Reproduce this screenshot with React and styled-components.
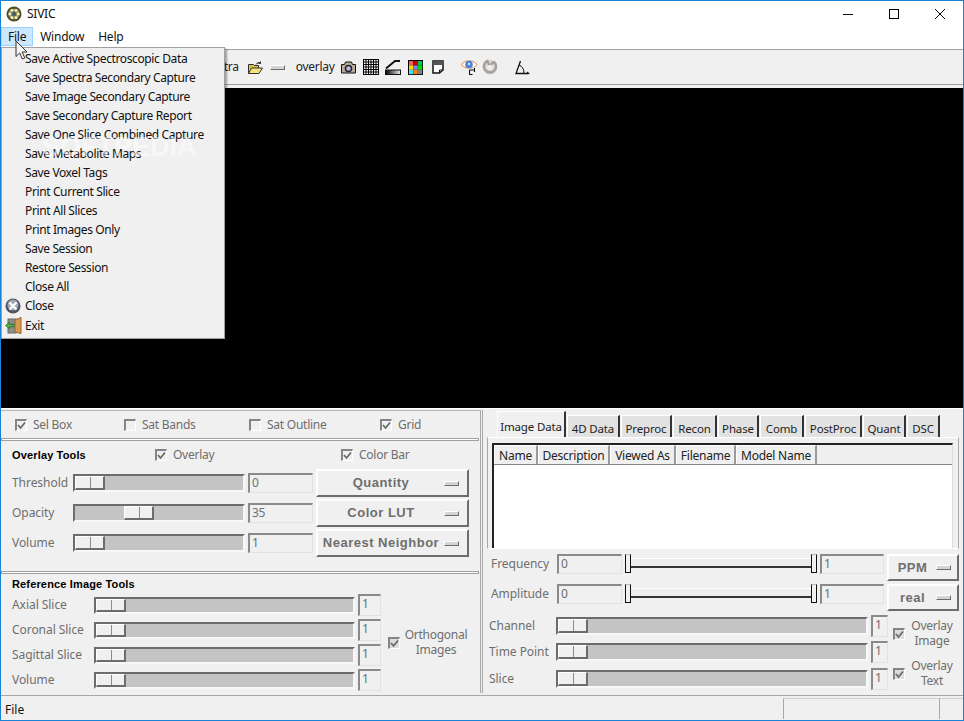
import React from "react";
import styled, { createGlobalStyle } from "styled-components";

const Global = createGlobalStyle`
  html, body { margin: 0; padding: 0; background: #f0f0f0; }
  * { box-sizing: border-box; }
`;

const UI = `"Noto Sans", "Open Sans", "Liberation Sans", sans-serif`;
const DIM = "#6e6e6e";

const Win = styled.div`
  position: relative; width: 964px; height: 721px; overflow: hidden;
  border: 1px solid #1a82d4; background: #f0f0f0;
  display: flex; flex-direction: column;
  font: 12px/16px ${UI}; letter-spacing: -0.25px; color: #111;
`;
const TitleBar = styled.div`
  height: 25px; flex: none; background: #fff; display: flex; align-items: center; padding-left: 5px; gap: 5px;
`;
const WinButtons = styled.div`margin-left: auto; display: flex;`;
const WinButton = styled.div`width: 46px; height: 25px; display: flex; align-items: center; justify-content: center;`;
const MenuBar = styled.div`height: 23px; flex: none; background: #fff; display: flex; align-items: flex-start; padding-top: 1px;`;
const MenuTitle = styled.div`
  height: 19px; line-height: 17px; padding: 0 6px; border: 1px solid ${p => (p.$open ? "#99d1ff" : "transparent")};
  background: ${p => (p.$open ? "#cce8ff" : "transparent")};
`;
const Toolbar = styled.div`
  height: 36px; flex: none; margin-bottom: 3px; border-top: 1px solid #a0a0a0; border-bottom: 1px solid #a0a0a0;
  display: flex; align-items: center; padding-left: 198px; color: #222;
`;
const ToolText = styled.span`margin-left: ${p => p.$ml || 0}px;`;
const ToolIcon = styled.svg`flex: none; display: block; margin-left: ${p => p.$ml || 0}px; overflow: visible;`;
const Canvas = styled.div`height: 320px; flex: none; background: #000;`;

const Controls = styled.div`height: 288px; flex: none; display: flex; border-top: 1px solid #fff;`;
const LeftPanel = styled.div`width: 479px; flex: none; display: flex; flex-direction: column;`;
const RightPanel = styled.div`
  flex: 1; position: relative; border-left: 3px double #a8a8a8; margin-top: 1px; margin-bottom: 3px;
  display: flex; flex-direction: column; padding: 1px 0 0 4px;
`;
const CheckRow = styled.div`
  height: 28px; display: grid; grid-template-columns: 109px 125px 131px 1fr; align-items: center; padding-left: 14px;
  border-top: 1px solid #b8b8b8; margin-top: 1px;
`;
const CheckLabel = styled.label`
  display: flex; align-items: center; gap: 6px; color: ${DIM};
`;
const Box = styled.span`
  width: 12px; height: 12px; flex: none; display: flex; align-items: center; justify-content: center;
  border-top: 2px solid #858585; border-left: 2px solid #858585; border-bottom: 1px solid #fff; border-right: 1px solid #fff;
  background: ${p => (p.$dark ? "#dcdcdc" : "#f0f0f0")};
`;
const Groove = styled.div`height: 3px; flex: none; width: 478px; border: 1px solid #a0a0a0; background: #fff;`;
const OverlaySection = styled.div`height: 130px; flex: none; display: flex; flex-direction: column; padding: 6px 0 0 11px;`;
const HeadRow = styled.div`height: 16px; display: grid; grid-template-columns: 143px 186px 1fr; align-items: center;`;
const Heading = styled.span`font: bold 11px/14px "Liberation Sans", sans-serif; letter-spacing: 0.15px; color: #000;`;
const ToolRows = styled.div`display: flex; flex-direction: column; gap: 2px; margin-top: 6px;`;
const ToolRow = styled.div`
  height: 28px; display: grid; grid-template-columns: 58px 172px 65px 153px; column-gap: 3px; align-items: center;
`;
const FieldLabel = styled.span`color: ${DIM}; letter-spacing: -0.05px; white-space: nowrap;`;
const Trough = styled.div`
  height: ${p => p.$h || 18}px; background: #c4c4c4; padding-left: ${p => p.$pos || 0}px;
  border-top: 2px solid #6c6c6c; border-left: 2px solid #6c6c6c; border-bottom: 2px solid #f8f8f8; border-right: 2px solid #f8f8f8;
  display: flex;
`;
const Handle = styled.div`
  width: 30px; height: 100%; flex: none; background: linear-gradient(90deg, #f0f0f0 0 14px, #8c8c8c 14px 15px, #f0f0f0 15px);
  border-top: 1px solid #fff; border-left: 1px solid #fff; border-right: 2px solid #6c6c6c; border-bottom: 2px solid #6c6c6c;
`;
const Entry = styled.div`
  height: ${p => p.$h || 20}px; padding-left: 2px; color: ${DIM}; background: #f0f0f0;
  border-top: 2px solid #8a8a8a; border-left: 2px solid #8a8a8a; border-bottom: 1px solid #e2e2e2; border-right: 1px solid #e2e2e2;
  font: 12px/16px ${UI};
`;
const OptionButton = styled.div`
  height: ${p => p.$h || 28}px; display: flex; align-items: center; padding-right: ${p => p.$pr || 8}px; background: #f0f0f0;
  border-top: 2px solid #fff; border-left: 2px solid #fff; border-bottom: 2px solid #6c6c6c; border-right: 2px solid #6c6c6c;
  color: ${DIM}; font: bold 13px/16px "Liberation Sans", sans-serif; letter-spacing: 0.5px; white-space: nowrap;
`;
const OptionText = styled.span`flex: 1; text-align: center;`;
const Indicator = styled.span`
  width: 15px; height: 5px; flex: none; background: #d4d4d4; margin-left: ${p => p.$ml || 0}px;
  border-top: 1px solid #fff; border-left: 1px solid #fff; border-bottom: 1px solid #6c6c6c; border-right: 1px solid #6c6c6c;
`;
const RefSection = styled.div`flex: 1; padding: 3px 0 0 11px; display: flex; flex-direction: column;`;
const RefBody = styled.div`display: flex; margin-top: 3px;`;
const RefRows = styled.div`display: flex; flex-direction: column; gap: 3px;`;
const RefRow = styled.div`height: 22px; display: grid; grid-template-columns: 79px 261px 23px; column-gap: 3px; align-items: center;`;
const SideCheck = styled.div`
  display: flex; align-items: center; color: ${DIM}; line-height: 15px; text-align: center;
  margin-left: ${p => p.$ml}px;
`;
const SideText = styled.span`width: ${p => p.$w}px; margin-top: -2px;`;

const TabStrip = styled.div`height: 26px; flex: none; display: flex; align-items: flex-end; padding-left: 10px; gap: 1px;`;
const Tab = styled.div`
  width: ${p => p.$w}px; height: ${p => (p.$on ? 26 : 22)}px; text-align: center; line-height: ${p => (p.$on ? 29 : 26)}px;
  background: ${p => (p.$on ? "#f0f0f0" : "#e2e2e2")}; color: #222;
  border-top: 1px solid #fff; border-left: 1px solid #fff; border-right: 2px solid #333;
  font-size: 11.5px; letter-spacing: -0.15px; white-space: nowrap;
`;
const Pane = styled.div`
  height: 112px; width: 472px; flex: none; border-top: 1px solid #fff; border-left: 1px solid #a8a8a8; border-right: 1px solid #a8a8a8; border-bottom: 1px solid #fff;
  padding: 5px 5px 0 4px;
`;
const Table = styled.div`
  height: 105px; background: #fff; border-top: 2px solid #222; border-left: 2px solid #222; border-right: 1px solid #ddd;
`;
const HeaderRow = styled.div`height: 20px; display: flex; background: #efefef; border-bottom: 1px solid #888;`;
const HeaderCell = styled.div`
  width: ${p => p.$w}px; flex: none; text-align: center; line-height: 19px; color: #222; white-space: nowrap;
  border-top: 1px solid #fff; border-left: 1px solid #fff; border-right: 2px solid #9a9a9a;
`;
const RangeRows = styled.div`display: flex; flex-direction: column; gap: 3px; margin-top: 5px; padding-left: 4px;`;
const RangeRow = styled.div`
  height: 27px; display: grid; grid-template-columns: 63px 65px 192px 64px 72px; column-gap: 3px; align-items: start;
`;
const RangeLabel = styled(FieldLabel)`line-height: 20px;`;
const RangeTrack = styled.div`
  height: 20px; display: flex; align-items: stretch; justify-content: space-between; position: relative;
`;
const RangeLine = styled.div`
  position: absolute; left: 6px; right: 6px; top: 4px; height: 10px; border-top: 1px solid #fff; border-bottom: 2px solid #333; background: #ececec;
`;
const RangeThumb = styled.div`
  width: 6px; height: 19px; position: relative; background: #f0f0f0;
  border-left: 1px solid #111; border-right: 1px solid #111; border-bottom: 1px solid #111; border-top: 1px solid #bbb;
`;
const SliceBody = styled.div`display: flex; margin-top: 4px; padding-left: 2px;`;
const SliceRows = styled.div`display: grid; grid-template-rows: 26px 27px 22px;`;
const SliceRow = styled.div`height: 22px; display: grid; grid-template-columns: 64px 312px 17px; column-gap: 3px; align-items: center;`;
const SideStack = styled.div`display: flex; flex-direction: column; gap: 12px; margin-top: 5px;`;
const StatusBar = styled.div`height: 24px; flex: none; display: flex; border-top: 1px solid #a8a8a8; margin-top: -1px;`;
const StatusText = styled.div`flex: 1; padding: 6px 0 0 4px; letter-spacing: 0;`;
const StatusCell = styled.div`
  width: ${p => p.$w}px; flex: none; margin-top: 2px; border-top: 1px solid #d0d0d0; border-left: 1px solid #a8a8a8;
`;
const Menu = styled.div`
  position: absolute; left: 0; top: 46px; width: 224px; height: 292px; padding-top: 1px; background: #f0f0f0;
  border: 1px solid #a0a0a0; box-shadow: 2px 2px 2px rgba(0,0,0,.35); color: #111; overflow: hidden;
  letter-spacing: -0.38px;
`;
const MenuRow = styled.div`
  height: ${p => p.$h || 19}px; display: flex; align-items: center; white-space: nowrap; position: relative; padding-left: 23px;
`;
const MenuIcon = styled.svg`position: absolute; left: 3px; top: 2px;`;
const Watermark = styled.div`
  position: absolute; left: 40px; top: 84px; font: bold 27px/30px "Liberation Sans", sans-serif; letter-spacing: 0;
  color: rgba(255,255,255,.5); pointer-events: none;
`;
const Cursor = styled.svg`position: absolute; left: 14px; top: 39px;`;

const Check = ({ dark }) => (
  <Box $dark={dark}>
    <svg width="9" height="9" viewBox="0 0 9 9"><path d="M1 4l2.5 3L8 1.5" fill="none" stroke="#666" strokeWidth="1.7" /></svg>
  </Box>
);
const Empty = () => <Box />;
const Slider = ({ pos, h }) => <Trough $pos={pos} $h={h}><Handle /></Trough>;

const Logo = () => (
  <svg width="16" height="16" viewBox="0 0 16 16" style={{ display: "block" }}>
    <circle cx="8" cy="8" r="7.5" fill="#4c4a22" />
    <circle cx="8" cy="8" r="5.6" fill="#9a9640" />
    {[0, 60, 120, 180, 240, 300].map(a => (
      <circle key={a} cx={8 + 4.2 * Math.cos((a * Math.PI) / 180)} cy={8 + 4.2 * Math.sin((a * Math.PI) / 180)} r="1.4" fill="#efefe2" />
    ))}
    <circle cx="8" cy="8" r="2.2" fill="#4a5f6e" />
  </svg>
);

const Folder = () => (
  <ToolIcon $ml={9} width="15" height="13" viewBox="0 0 15 13">
    <path d="M0.5 3.5h5l1 1h4v8h-10z" fill="#d8c24a" stroke="#333" />
    <path d="M0.5 12.5l3-5.5h11l-3.5 5.5z" fill="#f6e27a" stroke="#333" />
    <path d="M8 3.5c1-2 3-2.500 4.500-1.500M12.500 0.500v2h-2" fill="none" stroke="#222" />
  </ToolIcon>
);
const Camera = () => (
  <ToolIcon $ml={6} width="15" height="13" viewBox="0 0 15 13">
    <path d="M0.500 3.500h3l1-2.500h6l1 2.500h3v8.500h-14z" fill="#b9ae9a" stroke="#111" />
    <circle cx="7.500" cy="7.500" r="3.800" fill="#222" />
    <circle cx="7.500" cy="7.500" r="2.300" fill="#b8b8e8" />
  </ToolIcon>
);
const GridIcon = () => {
  const lines = [0, 1, 2, 3, 4, 5, 6].map(i => 0.5 + i * 2.5);
  return (
    <ToolIcon $ml={7} width="16" height="16" viewBox="0 0 16 16">
      <rect x="0" y="0" width="16" height="16" fill="#fff" />
      {lines.map(v => <path key={v} d={`M${v} 0v16M0 ${v}h16`} stroke="#000" />)}
      <path d="M15.500 0v16M0 15.500h16" stroke="#000" />
    </ToolIcon>
  );
};
const Wedge = () => (
  <ToolIcon $ml={6} width="16" height="16" viewBox="0 0 16 16">
    <path d="M1 9.500L10 2h5" fill="none" stroke="#111" strokeWidth="2" />
    <defs><linearGradient id="wg" x1="0" x2="1"><stop offset="0" stopColor="#000" /><stop offset="1" stopColor="#eee" /></linearGradient></defs>
    <rect x="0.500" y="11" width="15" height="4.500" fill="url(#wg)" stroke="#111" />
  </ToolIcon>
);
const Palette = () => {
  const c = ["#ff5a5a", "#c00000", "#00c060", "#f4e000", "#8080ff", "#00e000", "#40e0ff", "#ff8000", "#808080"];
  return (
    <ToolIcon $ml={7} width="15" height="15" viewBox="0 0 15 15">
      <rect x="0.500" y="0.500" width="14" height="14" fill="#000" stroke="#000" />
      {c.map((col, i) => <rect key={i} x={1 + (i % 3) * 4.400} y={1 + Math.floor(i / 3) * 4.400} width="4.400" height="4.400" fill={col} />)}
    </ToolIcon>
  );
};
const Note = () => (
  <ToolIcon $ml={9} width="12" height="14" viewBox="0 0 12 14">
    <path d="M1 1h10v9l-3.500 3H1z" fill="#fff" stroke="#111" strokeWidth="1.500" />
    <rect x="1" y="1" width="10" height="4" fill="#555" />
    <path d="M11 10H7.500v3" fill="none" stroke="#111" />
  </ToolIcon>
);
const Eye = () => (
  <ToolIcon $ml={17} width="17" height="16" viewBox="0 0 17 16">
    <path d="M0.500 5.500C4 0.500 12 0.500 16 5.500C12 10.500 4 10.500 0.500 5.500z" fill="#fff" stroke="#e0a070" strokeWidth="1.200" />
    <ellipse cx="8" cy="5.500" rx="3.800" ry="3.800" fill="#4a80d8" />
    <circle cx="8" cy="5" r="1.300" fill="#cfe0ff" />
    <path d="M8.500 15.500v-4.500h5M13.500 9v4M11.500 15.500h-3" fill="none" stroke="#000" />
  </ToolIcon>
);
const Swirl = () => (
  <ToolIcon $ml={4} width="16" height="16" viewBox="0 0 16 16">
    <circle cx="8" cy="8" r="7.500" fill="#e6d8cc" />
    <path d="M5 2.200A6 6 0 1 0 11.500 2.600" fill="none" stroke="#a2a2a2" strokeWidth="2.600" />
    <path d="M5 1l3 7 3-5.500" fill="none" stroke="#9c9c9c" strokeWidth="2.200" />
    <circle cx="8" cy="8.500" r="2.800" fill="#ececec" />
  </ToolIcon>
);
const Angle = () => (
  <ToolIcon $ml={17} width="16" height="15" viewBox="0 0 16 15">
    <path d="M5.500 1L1 13.500h11" fill="none" stroke="#111" strokeWidth="1.300" />
    <path d="M4 5c3 1 5 4 5 8" fill="none" stroke="#111" />
    <path d="M12 11.500l3 2-3 1z" fill="#111" />
  </ToolIcon>
);

const MENU = [
  "Save Active Spectroscopic Data", "Save Spectra Secondary Capture", "Save Image Secondary Capture",
  "Save Secondary Capture Report", "Save One Slice Combined Capture", "Save Metabolite Maps", "Save Voxel Tags",
  "Print Current Slice", "Print All Slices", "Print Images Only", "Save Session", "Restore Session", "Close All",
];
const TABS = [["Image Data", 69], ["4D Data", 53], ["Preproc", 51], ["Recon", 44], ["Phase", 41], ["Comb", 44], ["PostProc", 57], ["Quant", 43], ["DSC", 33]];
const HEADS = [["Name", 44], ["Description", 72], ["Viewed As", 66], ["Filename", 60], ["Model Name", 81]];

export default function App() {
  return (
    <Win>
      <Global />
      <TitleBar>
        <Logo />
        <span>SIVIC</span>
        <WinButtons>
          <WinButton><svg width="10" height="10"><path d="M0 5.500h10" stroke="#000" /></svg></WinButton>
          <WinButton><svg width="10" height="10"><rect x=".5" y=".5" width="9" height="9" fill="none" stroke="#000" /></svg></WinButton>
          <WinButton><svg width="10" height="10"><path d="M0 0l10 10M10 0L0 10" stroke="#000" /></svg></WinButton>
        </WinButtons>
      </TitleBar>
      <MenuBar>
        <MenuTitle $open>File</MenuTitle>
        <MenuTitle>Window</MenuTitle>
        <MenuTitle>Help</MenuTitle>
      </MenuBar>
      <Toolbar>
        <ToolText>spectra</ToolText>
        <Folder />
        <Indicator $ml={7} />
        <ToolText $ml={11}>overlay</ToolText>
        <Camera />
        <GridIcon />
        <Wedge />
        <Palette />
        <Note />
        <Eye />
        <Swirl />
        <Angle />
      </Toolbar>
      <Canvas />
      <Controls>
        <LeftPanel>
          <CheckRow>
            <CheckLabel><Check />Sel Box</CheckLabel>
            <CheckLabel><Empty />Sat Bands</CheckLabel>
            <CheckLabel><Empty />Sat Outline</CheckLabel>
            <CheckLabel><Check />Grid</CheckLabel>
          </CheckRow>
          <Groove />
          <OverlaySection>
            <HeadRow>
              <Heading>Overlay Tools</Heading>
              <CheckLabel><Check />Overlay</CheckLabel>
              <CheckLabel><Check />Color Bar</CheckLabel>
            </HeadRow>
            <ToolRows>
              <ToolRow><FieldLabel>Threshold</FieldLabel><Slider /><Entry>0</Entry><OptionButton><OptionText>Quantity</OptionText><Indicator /></OptionButton></ToolRow>
              <ToolRow><FieldLabel>Opacity</FieldLabel><Slider pos={49} /><Entry>35</Entry><OptionButton><OptionText>Color LUT</OptionText><Indicator /></OptionButton></ToolRow>
              <ToolRow><FieldLabel>Volume</FieldLabel><Slider /><Entry>1</Entry><OptionButton><OptionText>Nearest Neighbor</OptionText><Indicator /></OptionButton></ToolRow>
            </ToolRows>
          </OverlaySection>
          <Groove />
          <RefSection>
            <Heading>Reference Image Tools</Heading>
            <RefBody>
              <RefRows>
                {["Axial Slice", "Coronal Slice", "Sagittal Slice", "Volume"].map(l => (
                  <RefRow key={l}><FieldLabel>{l}</FieldLabel><Slider h={17} /><Entry $h={22}>1</Entry></RefRow>
                ))}
              </RefRows>
              <SideCheck $ml={7}><Check dark /><SideText $w={72}>Orthogonal<br />Images</SideText></SideCheck>
            </RefBody>
          </RefSection>
        </LeftPanel>
        <RightPanel>
          <TabStrip>
            {TABS.map(([t, w], i) => <Tab key={t} $w={w} $on={i === 0}>{t}</Tab>)}
          </TabStrip>
          <Pane>
            <Table>
              <HeaderRow>
                {HEADS.map(([h, w]) => <HeaderCell key={h} $w={w}>{h}</HeaderCell>)}
              </HeaderRow>
            </Table>
          </Pane>
          <RangeRows>
            {[["Frequency", "PPM"], ["Amplitude", "real"]].map(([l, b]) => (
              <RangeRow key={l}>
                <RangeLabel>{l}</RangeLabel>
                <Entry>0</Entry>
                <RangeTrack><RangeLine /><RangeThumb /><RangeThumb /></RangeTrack>
                <Entry>1</Entry>
                <OptionButton $h={27} $pr={6}><OptionText>{b}</OptionText><Indicator /></OptionButton>
              </RangeRow>
            ))}
          </RangeRows>
          <SliceBody>
            <SliceRows>
              {["Channel", "Time Point", "Slice"].map(l => (
                <SliceRow key={l}><FieldLabel>{l}</FieldLabel><Slider /><Entry $h={22}>1</Entry></SliceRow>
              ))}
            </SliceRows>
            <SideStack>
              <SideCheck $ml={5}><Check dark /><SideText $w={54}>Overlay<br />Image</SideText></SideCheck>
              <SideCheck $ml={5}><Check dark /><SideText $w={54}>Overlay<br />Text</SideText></SideCheck>
            </SideStack>
          </SliceBody>
        </RightPanel>
      </Controls>
      <StatusBar>
        <StatusText>File</StatusText>
        <StatusCell $w={156} />
        <StatusCell $w={24} />
      </StatusBar>
      <Menu>
        {MENU.map(m => <MenuRow key={m}>{m}</MenuRow>)}
        <MenuRow>
          <MenuIcon width="16" height="16" viewBox="0 0 16 16">
            <circle cx="8" cy="8" r="7.500" fill="#4f5464" />
            <circle cx="8" cy="7" r="5.500" fill="#a4a7b2" />
            <path d="M4.500 4.500l7 7M11.500 4.500l-7 7" stroke="#fff" strokeWidth="2.200" />
          </MenuIcon>
          Close
        </MenuRow>
        <MenuRow $h={21}>
          <MenuIcon width="17" height="17" viewBox="0 0 17 17">
            <rect x="3" y="2" width="8" height="14" fill="#8a8f86" stroke="#666" />
            <path d="M10 3l6-2.500v16l-6-1.500z" fill="#d89a50" stroke="#9a6428" />
            <path d="M0.500 8.500l4-3v1.800h4.500v2.500H4.500v1.800z" fill="#58b850" stroke="#2f7a2f" />
          </MenuIcon>
          Exit
        </MenuRow>
        <Watermark>SOFTPEDIA</Watermark>
      </Menu>
      <Cursor width="14" height="21" viewBox="0 0 14 21">
        <path d="M1 1v15.500l3.700-3.500 2.600 6 2.500-1-2.600-6H12z" fill="#f4f4f4" stroke="#333" strokeWidth="1" />
      </Cursor>
    </Win>
  );
}
